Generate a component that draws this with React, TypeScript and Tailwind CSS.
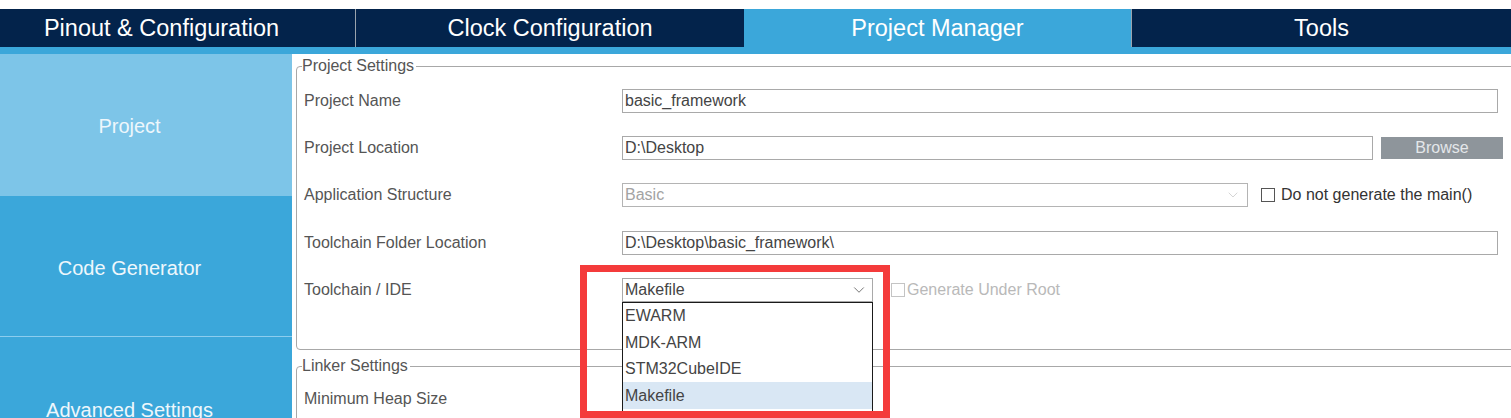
import { ChevronDown } from "lucide-react";

const tabs = [
  { label: "Pinout & Configuration", w: "w-[355px] pr-[32px]", active: false },
  { label: "Clock Configuration", w: "w-[389px] border-l border-[#9aa3ad]", active: false },
  { label: "Project Manager", w: "w-[387px]", active: true },
  { label: "Tools", w: "flex-1 border-l border-[#9aa3ad]", active: false },
];

const toolchains = ["EWARM", "MDK-ARM", "STM32CubeIDE", "Makefile"];

function Row({ label, children }: { label: string; children?: React.ReactNode }) {
  return (
    <div className="flex items-center h-[47.3px]">
      <div className="w-[325px] shrink-0 pl-[7px] text-[16px] text-[#555]">{label}</div>
      {children}
    </div>
  );
}

function TextBox({ value, className }: { value: string; className: string }) {
  return (
    <div
      className={`h-[24px] border border-[#a9a9a9] flex items-center pl-[2px] text-[16px] text-[#444] bg-white ${className}`}
    >
      {value}
    </div>
  );
}

function CheckBox({ disabled }: { disabled?: boolean }) {
  return (
    <span
      className={`inline-block w-[14px] h-[14px] border bg-white ${
        disabled ? "border-[#c4c4c4]" : "border-[#555]"
      }`}
    />
  );
}

export default function App() {
  return (
    <div className="relative w-[1511px] h-[418px] overflow-hidden bg-white font-['Liberation_Sans',Arial,sans-serif]">
      {/* Top tabs */}
      <div className="h-[9px] bg-white" />
      <div className="flex h-[38px] bg-[#03234b]">
        {tabs.map((t) => (
          <div
            key={t.label}
            className={`flex items-center justify-center pt-[2px] text-[23.5px] text-white ${t.w} ${
              t.active ? "bg-[#3ba7da]" : ""
            }`}
          >
            {t.label}
          </div>
        ))}
      </div>
      <div className="h-[7px] bg-[#3ba7da]" />

      <div className="flex">
        {/* Sidebar */}
        <div className="w-[292px] shrink-0 text-[20px] text-[#eef7fc]">
          <div className="h-[142px] bg-[#7dc5e8] flex items-center justify-center pr-[33px] pt-[2px]">
            Project
          </div>
          <div className="h-[140px] bg-[#3ba7da] flex items-center justify-center pr-[33px] pt-[4px]">
            Code Generator
          </div>
          <div className="h-px bg-[#8ccdee]" />
          <div className="h-[140px] bg-[#3ba7da] flex items-center justify-center pr-[33px] pt-[5px]">
            Advanced Settings
          </div>
        </div>

        {/* Main */}
        <div className="flex-1 pl-[4px] pt-[3px]">
          <fieldset className="w-[1230px] h-[293px] border border-[#a8a8a8] rounded-[4px]">
            <legend className="ml-[5px] pr-[2px] text-[16px] leading-[18px] text-[#555]">
              Project Settings
            </legend>
            <div className="pt-[2px]">
              <Row label="Project Name">
                <TextBox value="basic_framework" className="w-[876px]" />
              </Row>
              <Row label="Project Location">
                <TextBox value="D:\Desktop" className="w-[751px]" />
                <div className="ml-[8px] w-[122px] h-[22px] bg-[#8e959b] text-[#e4e7ea] text-[16px] flex items-center justify-center">
                  Browse
                </div>
              </Row>
              <Row label="Application Structure">
                <div className="w-[626px] h-[24px] border border-[#b4b4b4] flex items-center justify-between pl-[2px] pr-[6px] text-[16px] text-[#a3a3a3]">
                  <span>Basic</span>
                  <ChevronDown className="w-[16px] h-[16px] text-[#c0c0c0]" strokeWidth={1} />
                </div>
                <div className="ml-[13px] flex items-center gap-[6px] text-[16px] text-[#333]">
                  <CheckBox />
                  <span>Do not generate the main()</span>
                </div>
              </Row>
              <Row label="Toolchain Folder Location">
                <TextBox value="D:\Desktop\basic_framework\" className="w-[876px]" />
              </Row>
              <Row label="Toolchain / IDE">
                <div className="relative w-[251px] h-[24px] border border-[#a9a9a9] flex items-center justify-between pl-[2px] pr-[4px] text-[16px] text-[#444]">
                  <span>Makefile</span>
                  <ChevronDown className="w-[18px] h-[18px] text-[#666]" strokeWidth={1.2} />
                  {/* open dropdown list */}
                  <div className="absolute left-[-1px] top-[23px] w-[251px] h-[110px] border border-[#1a1a1a] bg-white z-10">
                    {toolchains.map((tc) => (
                      <div
                        key={tc}
                        className={`h-[26.5px] flex items-center pl-[2px] text-[16px] text-[#444] ${
                          tc === "Makefile" ? "bg-[#d9e7f4]" : ""
                        }`}
                      >
                        {tc}
                      </div>
                    ))}
                  </div>
                </div>
                <div className="ml-[18px] flex items-center gap-[2px] text-[16px] text-[#b9b9b9]">
                  <CheckBox disabled />
                  <span>Generate Under Root</span>
                </div>
              </Row>
            </div>
          </fieldset>

          <fieldset className="mt-[7px] w-[1230px] h-[120px] border border-[#a8a8a8] rounded-[4px]">
            <legend className="ml-[5px] pr-[2px] text-[16px] leading-[18px] text-[#555]">
              Linker Settings
            </legend>
            <Row label="Minimum Heap Size" />
          </fieldset>
        </div>
      </div>

      {/* red highlight annotation */}
      <div className="absolute left-[580px] top-[265px] w-[310px] h-[153px] border-[7px] border-[#f43b3b] z-20" />
    </div>
  );
}
